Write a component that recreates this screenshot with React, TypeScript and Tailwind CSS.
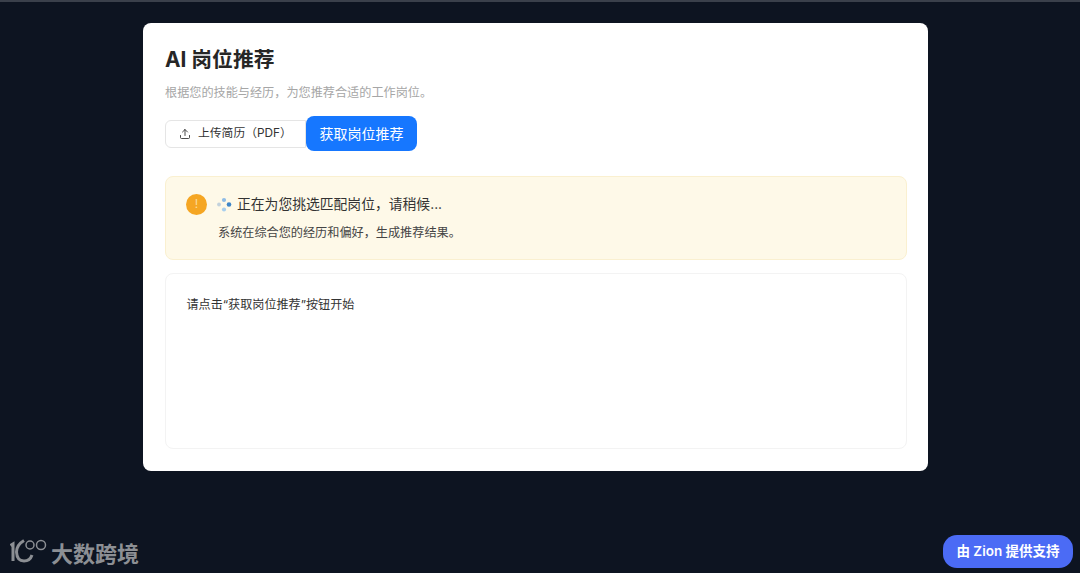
import React from 'react';
import { Upload } from 'lucide-react';

const cjk = "font-['Inter','Noto_Sans_CJK_SC',sans-serif]";

const App: React.FC = () => {
  return (
    <div className={`relative h-[573px] w-[1080px] overflow-hidden bg-[#0d1421] ${cjk}`}>
      <div className="h-[2px] bg-[#3a404b]" />

      {/* Card */}
      <div className="ml-[143px] mt-[21px] flex h-[448px] w-[785px] flex-col rounded-lg bg-white pl-[22px] pr-[21px] pt-[22px]">
        <h1 className="text-[20.8px] leading-[30px] font-bold text-[#262626]">AI 岗位推荐</h1>
        <p className="mt-[8px] text-[12.15px] leading-[20px] text-[#a6a6a6]">
          根据您的技能与经历，为您推荐合适的工作岗位。
        </p>

        <div className="mt-[13px] flex items-center">
          <button className="flex h-[28px] w-[141px] items-center rounded-l-md border border-[#e5e5e5] pl-[13px] pt-[1px] text-[11.8px] text-[#333]">
            <Upload size={12} strokeWidth={1.75} />
            <span className="ml-[7px]">上传简历（PDF）</span>
          </button>
          <button className="h-[35px] w-[111px] rounded-lg bg-[#1677ff] text-[14px] text-white">
            获取岗位推荐
          </button>
        </div>

        {/* Loading notice */}
        <div className="mt-[25px] h-[84px] rounded-lg border border-[#faf0d0] bg-[#fef9e8] pl-[20px] pt-[16px]">
          <div className="flex items-center">
            <span className="flex h-[21px] w-[21px] items-center justify-center rounded-full bg-[#f5a623] text-[12px] leading-none text-[#fbdc9c]">
              !
            </span>
            <svg className="ml-[9px]" width="16" height="16" viewBox="0 0 16 16">
              <circle cx="8" cy="4" r="2.1" fill="#8fbce6" />
              <circle cx="13" cy="8.5" r="2.3" fill="#3f86c8" />
              <circle cx="8" cy="13.5" r="2.1" fill="#a8cfee" />
              <circle cx="3" cy="8.5" r="1.9" fill="#c3d2dc" />
            </svg>
            <span className="ml-[5px] text-[13.8px] leading-[22px] text-[#333]">
              正在为您挑选匹配岗位，请稍候...
            </span>
          </div>
          <p className="ml-[32px] mt-[8px] text-[12.15px] leading-[20px] text-[#444]">
            系统在综合您的经历和偏好，生成推荐结果。
          </p>
        </div>

        {/* Result area */}
        <div className="mt-[13px] h-[176px] rounded-lg border border-[#f3f3f3] pl-[20.5px] pt-[21px] text-[12.1px] leading-[20px] text-[#333]">
          请点击“获取岗位推荐”按钮开始
        </div>
      </div>

      {/* Watermark */}
      <div className="absolute bottom-[8px] left-[10px] flex items-center text-[#8c8f94]">
        <svg width="38" height="26" viewBox="0 0 38 26" fill="none" stroke="currentColor">
          <path d="M0.5 6.5 L3 5 V22" strokeWidth="3" />
          <path d="M14 1.5 Q6.5 6 6.5 13 Q7 22 14 22 Q20 22 22 16" strokeWidth="3" />
          <circle cx="20" cy="6" r="4" strokeWidth="1.5" />
          <circle cx="31" cy="6" r="4.5" strokeWidth="1.5" />
        </svg>
        <span className="ml-[3px] font-['Noto_Sans_CJK_SC',sans-serif] text-[22px] leading-[26px] font-bold">大数跨境</span>
      </div>

      {/* Zion badge */}
      <div className="absolute bottom-[5px] right-[7px] flex h-[33px] w-[130px] items-center justify-center rounded-[14px] bg-[#4b6bf5] text-[13.5px] font-semibold text-white">
        由 Zion 提供支持
      </div>
    </div>
  );
};

export default App;
